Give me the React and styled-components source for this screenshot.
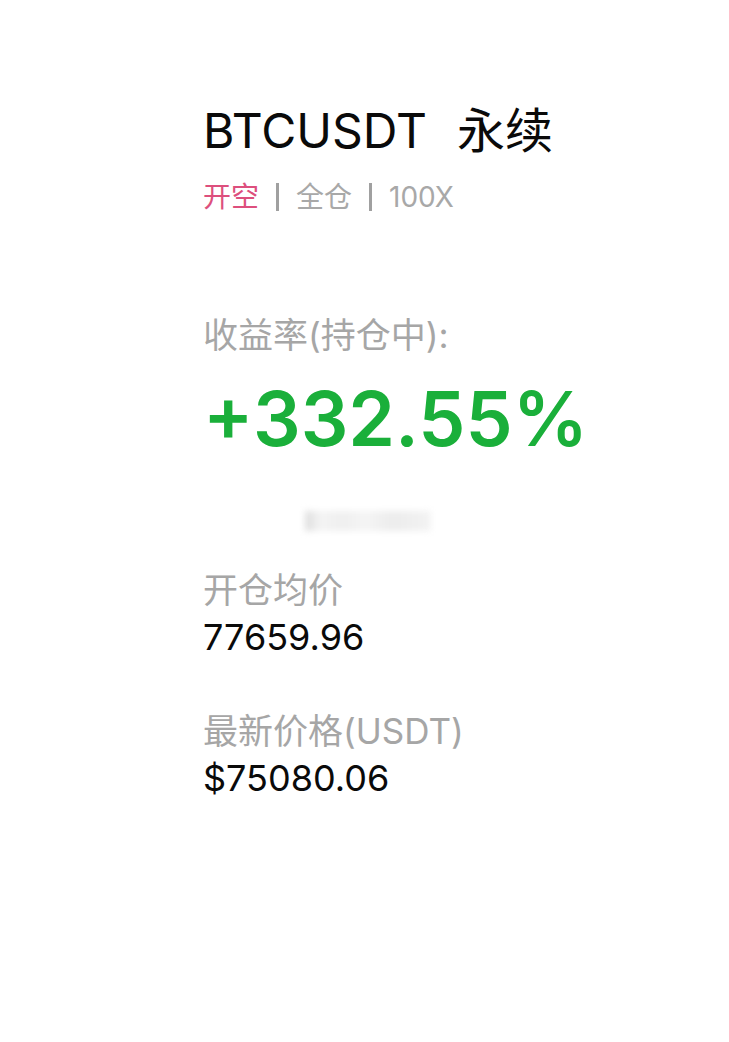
import React from "react";
import styled, { createGlobalStyle } from "styled-components";

const GlobalStyle = createGlobalStyle`
  html, body {
    margin: 0;
    padding: 0;
    background: #ffffff;
  }
  body {
    font-family: Inter, "Noto Sans CJK SC", sans-serif;
  }
`;

const Page = styled.div`
  width: 729px;
  min-height: 1042px;
  box-sizing: border-box;
  padding: 103px 0 0 203px;
  background: #fff;
`;

const Title = styled.h1`
  margin: 0;
  font-size: 48px;
  font-weight: 400;
  line-height: 56px;
  color: #0a0a0a;
  display: flex;
  align-items: baseline;
  gap: 30px;
`;

const Tags = styled.div`
  display: flex;
  align-items: center;
  gap: 17px;
  margin-top: 21px;
  font-size: 28px;
  line-height: 34px;
`;

const Tag = styled.span`
  color: ${(p) => (p.$accent ? "#dd4f7d" : "#a8a8a8")};
`;

const Divider = styled.span`
  width: 3px;
  height: 28px;
  background: #a0a0a0;
`;

const Label = styled.div`
  font-size: 35px;
  line-height: 42px;
  color: #a6a6a6;
  margin-top: ${(p) => p.$top || 0}px;
`;

const Rate = styled.div`
  margin-top: 21px;
  font-size: 75px;
  line-height: 84px;
  font-weight: 600;
  color: #1aaf3a;
`;

const Masked = styled.div`
  margin: 50px 0 0 102px;
  width: 126px;
  height: 20px;
  background: linear-gradient(
    90deg,
    #dcdcdc 0%,
    #f4f4f4 12%,
    #efefef 30%,
    #f5f5f5 48%,
    #ececec 70%,
    #f3f3f3 100%
  );
  filter: blur(3px);
`;

const Value = styled.div`
  margin-top: 5px;
  font-size: 36px;
  line-height: 42px;
  color: #0a0a0a;
`;

export default function App() {
  return (
    <>
      <GlobalStyle />
      <Page>
        <Title>
          <span>BTCUSDT</span>
          <span>永续</span>
        </Title>
        <Tags>
          <Tag $accent>开空</Tag>
          <Divider />
          <Tag>全仓</Tag>
          <Divider />
          <Tag>100X</Tag>
        </Tags>

        <Label $top={100}>收益率(持仓中):</Label>
        <Rate>+332.55%</Rate>

        <Masked />

        <Label $top={38}>开仓均价</Label>
        <Value>77659.96</Value>

        <Label $top={52}>最新价格(USDT)</Label>
        <Value>$75080.06</Value>
      </Page>
    </>
  );
}
